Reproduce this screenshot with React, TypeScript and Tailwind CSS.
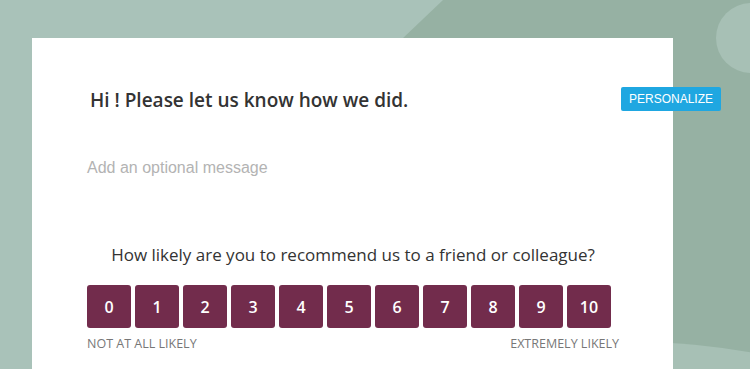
export default function App() {
  const scores = [0, 1, 2, 3, 4, 5, 6, 7, 8, 9, 10]

  return (
    <div className="relative h-[369px] w-[750px] overflow-hidden bg-[#a9c2b9] font-['Open_Sans',sans-serif]">
      {/* background shapes */}
      <div className="absolute inset-0 bg-[#96b1a3] [clip-path:polygon(443px_0,100%_0,100%_100%,55px_100%)]" />
      <div className="absolute left-[716px] top-[3px] h-[70px] w-[70px] rounded-full bg-[#a7c0b5]" />
      <div className="absolute left-[-184px] top-[341px] h-[1600px] w-[1600px] rounded-full bg-[#a7c0b5]" />

      {/* card */}
      <div className="relative ml-[32px] mt-[38px] h-[400px] w-[641px] bg-white px-[55px] pt-[49px]">
        <h1 className="pl-[3px] text-[19px] font-semibold leading-[26px] text-[#333]">
          Hi ! Please let us know how we did.
        </h1>

        <p className="mt-[43px] font-['Liberation_Sans',sans-serif] text-[16px] font-light leading-[24px] text-[#b3b3b3]">
          Add an optional message
        </p>

        <p className="mt-[63px] w-[532px] text-center text-[17px] leading-[24px] text-[#333]">
          How likely are you to recommend us to a friend or colleague?
        </p>

        <div className="mt-[18px] flex gap-[4px]">
          {scores.map((n) => (
            <div
              key={n}
              className="flex h-[43px] w-[44px] items-center justify-center rounded-[3px] bg-[#722c4c] text-[16px] font-semibold text-white"
            >
              {n}
            </div>
          ))}
        </div>

        <div className="mt-[7px] flex w-[532px] justify-between text-[12.5px] leading-[18px] text-[#777]">
          <span>NOT AT ALL LIKELY</span>
          <span>EXTREMELY LIKELY</span>
        </div>
      </div>

      <button className="absolute left-[621px] top-[87px] flex h-[24px] w-[100px] items-center justify-center rounded-[2px] bg-[#1fa7e1] font-['Liberation_Sans',sans-serif] text-[12px] text-white">
        PERSONALIZE
      </button>
    </div>
  )
}
